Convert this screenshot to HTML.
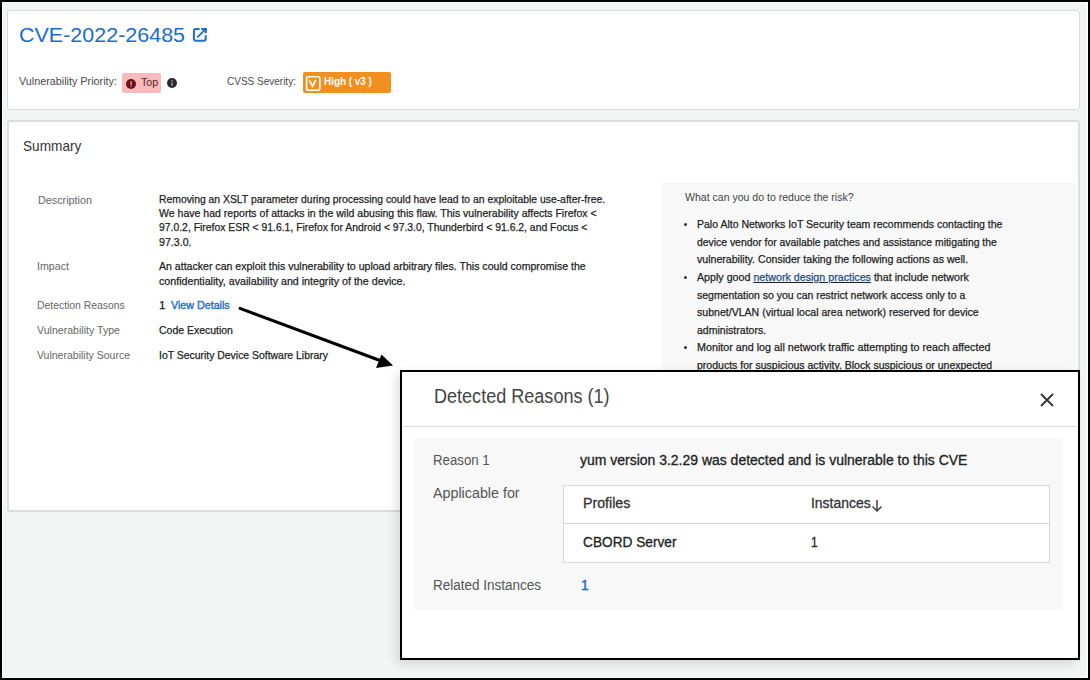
<!DOCTYPE html>
<html><head><meta charset="utf-8">
<style>
*{box-sizing:border-box;margin:0;padding:0}
html,body{width:1090px;height:680px;overflow:hidden}
body{position:relative;background:#000;font-family:"Liberation Sans",sans-serif;color:#333}
.frame{position:absolute;left:2px;top:2px;width:1086px;height:676px;background:#f3f4f4;border:1px solid #fff}
.abs{position:absolute}
.t{position:absolute;white-space:nowrap;line-height:1;transform-origin:0 0}
.card{position:absolute;background:#fff;border:1px solid #d9dbdb;border-radius:3px}
#c1{left:7px;top:10px;width:1073px;height:100px}
#c2{left:7px;top:120px;width:1073px;height:392px;border-width:2px;border-color:#dcdede}
.panel{position:absolute;left:662px;top:183px;width:415px;height:328px;background:#f8f8f8}
.bul{position:absolute;width:3px;height:3px;border-radius:50%;background:#333}
.modal{position:absolute;left:400px;top:370px;width:680px;height:290px;background:#fff;border:2px solid #000;box-shadow:-4px 4px 10px rgba(0,0,0,.12)}
</style></head>
<body>
<div class="frame"></div>
<div class="card" id="c1"></div>
<svg class="abs" style="left:192px;top:27px" width="16" height="16" viewBox="0 0 16 16"><path d="M7.6 2H3.9Q1.9 2 1.9 4V11.8Q1.9 13.8 3.9 13.8H11.7Q13.7 13.8 13.7 11.8V8.2" fill="none" stroke="#1a6dcc" stroke-width="2"/><path d="M9.2 2H13.7V6.3" fill="none" stroke="#1a6dcc" stroke-width="2"/><path d="M5.3 10.3L13 2.6" fill="none" stroke="#1a6dcc" stroke-width="1.9"/><path d="M10.5 1H14.7V5.2Z" fill="#1a6dcc"/></svg>
<div class="abs" style="left:122px;top:73px;width:39px;height:20px;background:#f8babd;border-radius:2px"></div>
<svg class="abs" style="left:126px;top:79px" width="10" height="10"><circle cx="5" cy="5" r="5" fill="#6d1111"/><rect x="4.5" y="2.2" width="1.1" height="3.8" fill="#e8c8c8"/><rect x="4.5" y="6.8" width="1.1" height="1.1" fill="#e8c8c8"/></svg>
<svg class="abs" style="left:166.5px;top:78px" width="10" height="10"><circle cx="5" cy="5" r="5" fill="#2a2a2a"/><rect x="4.5" y="4.2" width="1" height="3.8" fill="#ccc"/><rect x="4.5" y="2" width="1" height="1.2" fill="#ccc"/></svg>
<div class="abs" style="left:303px;top:72px;width:88px;height:21px;background:#f18f1f;border-radius:2px"></div>
<svg class="abs" style="left:305px;top:75px" width="16" height="16" viewBox="0 0 16 16"><rect x="1.6" y="1.8" width="13.2" height="13.4" rx="1.5" fill="none" stroke="#fff" stroke-width="1.6"/><path d="M4.2 4.8L7.5 11.4L10.8 4.8" fill="none" stroke="#fff" stroke-width="1.7"/></svg>
<div class="card" id="c2"></div>
<div class="panel"></div>
<div class="bul" style="left:684px;top:223px"></div>
<div class="bul" style="left:684px;top:276px"></div>
<div class="bul" style="left:684px;top:346px"></div>
<div class="t" style="left:18.78px;top:24.65px;font-size:20.5px;color:#1a6dcc;font-weight:400;transform:scaleX(1.0481)">CVE-2022-26485</div>
<div class="t" style="left:18.54px;top:76.27px;font-size:11.5px;color:#4a4a4a;font-weight:400;transform:scaleX(0.9380)">Vulnerability Priority:</div>
<div class="t" style="left:140.54px;top:77.27px;font-size:11.5px;color:#5e2222;font-weight:400;transform:scaleX(0.9285)">Top</div>
<div class="t" style="left:226.54px;top:76.27px;font-size:11.5px;color:#4a4a4a;font-weight:400;transform:scaleX(0.8697)">CVSS Severity:</div>
<div class="t" style="left:323.54px;top:75.87px;font-size:11.5px;color:#fff;font-weight:700;transform:scaleX(0.8620)">High ( v3 )</div>
<div class="t" style="left:23.12px;top:138.63px;font-size:14.5px;color:#333;font-weight:400;transform:scaleX(0.9406)">Summary</div>
<div class="t" style="left:37.75px;top:194.52px;font-size:11.2px;color:#666;font-weight:400;transform:scaleX(0.9648)">Description</div>
<div class="t" style="left:158.95px;top:194.12px;font-size:11.2px;color:#222;font-weight:400;transform:scaleX(0.9276);-webkit-text-stroke:0.25px #222">Removing an XSLT parameter during processing could have lead to an exploitable use-after-free.</div>
<div class="t" style="left:158.95px;top:207.92px;font-size:11.2px;color:#222;font-weight:400;transform:scaleX(0.9416);-webkit-text-stroke:0.25px #222">We have had reports of attacks in the wild abusing this flaw. This vulnerability affects Firefox &lt;</div>
<div class="t" style="left:158.95px;top:221.72px;font-size:11.2px;color:#222;font-weight:400;transform:scaleX(0.9286);-webkit-text-stroke:0.25px #222">97.0.2, Firefox ESR &lt; 91.6.1, Firefox for Android &lt; 97.3.0, Thunderbird &lt; 91.6.2, and Focus &lt;</div>
<div class="t" style="left:158.95px;top:236.52px;font-size:11.2px;color:#222;font-weight:400;transform:scaleX(0.9497);-webkit-text-stroke:0.25px #222">97.3.0.</div>
<div class="t" style="left:37.45px;top:261.32px;font-size:11.2px;color:#666;font-weight:400;transform:scaleX(0.9529)">Impact</div>
<div class="t" style="left:158.95px;top:261.12px;font-size:11.2px;color:#222;font-weight:400;transform:scaleX(0.9443);-webkit-text-stroke:0.25px #222">An attacker can exploit this vulnerability to upload arbitrary files. This could compromise the</div>
<div class="t" style="left:158.95px;top:275.92px;font-size:11.2px;color:#222;font-weight:400;transform:scaleX(0.9536);-webkit-text-stroke:0.25px #222">confidentiality, availability and integrity of the device.</div>
<div class="t" style="left:37.45px;top:300.12px;font-size:11.2px;color:#666;font-weight:400;transform:scaleX(0.9288)">Detection Reasons</div>
<div class="t" style="left:158.95px;top:300.12px;font-size:11.2px;color:#222;font-weight:400;transform:scaleX(1.0420);-webkit-text-stroke:0.25px #222">1</div>
<div class="t" style="left:170.55px;top:300.12px;font-size:11.2px;color:#1a6dcc;font-weight:400;transform:scaleX(0.9566);-webkit-text-stroke:0.4px #1a6dcc">View Details</div>
<div class="t" style="left:37.45px;top:325.02px;font-size:11.2px;color:#666;font-weight:400;transform:scaleX(0.9465)">Vulnerability Type</div>
<div class="t" style="left:158.95px;top:325.32px;font-size:11.2px;color:#222;font-weight:400;transform:scaleX(0.9354);-webkit-text-stroke:0.25px #222">Code Execution</div>
<div class="t" style="left:37.45px;top:349.82px;font-size:11.2px;color:#666;font-weight:400;transform:scaleX(0.9385)">Vulnerability Source</div>
<div class="t" style="left:158.95px;top:350.22px;font-size:11.2px;color:#222;font-weight:400;transform:scaleX(0.9313);-webkit-text-stroke:0.25px #222">IoT Security Device Software Library</div>
<div class="t" style="left:684.55px;top:192.42px;font-size:11.2px;color:#444;font-weight:400;transform:scaleX(0.9413)">What can you do to reduce the risk?</div>
<div class="t" style="left:697.25px;top:219.12px;font-size:11.2px;color:#222;font-weight:400;transform:scaleX(0.9397);-webkit-text-stroke:0.25px #222">Palo Alto Networks IoT Security team recommends contacting the</div>
<div class="t" style="left:697.25px;top:236.82px;font-size:11.2px;color:#222;font-weight:400;transform:scaleX(0.9288);-webkit-text-stroke:0.25px #222">device vendor for available patches and assistance mitigating the</div>
<div class="t" style="left:697.25px;top:254.32px;font-size:11.2px;color:#222;font-weight:400;transform:scaleX(0.9463);-webkit-text-stroke:0.25px #222">vulnerability. Consider taking the following actions as well.</div>
<div class="t" style="left:697.25px;top:271.82px;font-size:11.2px;color:#222;font-weight:400;transform:scaleX(0.9545);-webkit-text-stroke:0.25px #222">Apply good <span style="color:#1a6dcc;text-decoration:underline">network design practices</span> that include network</div>
<div class="t" style="left:697.25px;top:290.12px;font-size:11.2px;color:#222;font-weight:400;transform:scaleX(0.9356);-webkit-text-stroke:0.25px #222">segmentation so you can restrict network access only to a</div>
<div class="t" style="left:697.25px;top:307.42px;font-size:11.2px;color:#222;font-weight:400;transform:scaleX(0.9438);-webkit-text-stroke:0.25px #222">subnet/VLAN (virtual local area network) reserved for device</div>
<div class="t" style="left:697.25px;top:324.92px;font-size:11.2px;color:#222;font-weight:400;transform:scaleX(0.9430);-webkit-text-stroke:0.25px #222">administrators.</div>
<div class="t" style="left:697.25px;top:342.42px;font-size:11.2px;color:#222;font-weight:400;transform:scaleX(0.9602);-webkit-text-stroke:0.25px #222">Monitor and log all network traffic attempting to reach affected</div>
<div class="t" style="left:697.25px;top:359.92px;font-size:11.2px;color:#222;font-weight:400;transform:scaleX(0.9404);-webkit-text-stroke:0.25px #222">products for suspicious activity. Block suspicious or unexpected</div>

<svg class="abs" style="left:0;top:0" width="1090" height="680"><line x1="240" y1="308.4" x2="380" y2="360.5" stroke="#000" stroke-width="3" stroke-linecap="round"/><path d="M393 365.5L376 368L381.5 354.5Z" fill="#000"/></svg>
<div class="modal"></div>
<svg class="abs" style="left:1040px;top:393px" width="14" height="14"><path d="M1 1L13 13M13 1L1 13" stroke="#333" stroke-width="1.8"/></svg>
<div class="abs" style="left:402px;top:426px;width:676px;height:1px;background:#dcdcdc"></div>
<div class="abs" style="left:414px;top:438px;width:649px;height:172px;background:#f8f8f8"></div>
<div class="abs" style="left:563px;top:485px;width:487px;height:78px;background:#fff;border:1px solid #d6d6d6"></div>
<div class="abs" style="left:564px;top:523px;width:485px;height:1px;background:#d6d6d6"></div>
<svg class="abs" style="left:871px;top:499px" width="12" height="14"><path d="M6 1v11M1.5 7.5L6 12l4.5-4.5" fill="none" stroke="#444" stroke-width="1.5"/></svg>

<div class="t" style="left:433.72px;top:386.69px;font-size:19.5px;color:#444;font-weight:400;transform:scaleX(0.9255)">Detected Reasons (1)</div>
<div class="t" style="left:433.44px;top:452.65px;font-size:14px;color:#555;font-weight:400;transform:scaleX(0.9447)">Reason 1</div>
<div class="t" style="left:579.94px;top:452.95px;font-size:14px;color:#222;font-weight:400;transform:scaleX(0.9977);-webkit-text-stroke:0.3px #222">yum version 3.2.29 was detected and is vulnerable to this CVE</div>
<div class="t" style="left:432.94px;top:486.15px;font-size:14px;color:#555;font-weight:400;transform:scaleX(1.0211)">Applicable for</div>
<div class="t" style="left:582.64px;top:495.75px;font-size:14px;color:#333;font-weight:400;transform:scaleX(1.0135);-webkit-text-stroke:0.3px #333">Profiles</div>
<div class="t" style="left:811.44px;top:495.75px;font-size:14px;color:#333;font-weight:400;transform:scaleX(0.9947);-webkit-text-stroke:0.3px #333">Instances</div>
<div class="t" style="left:582.64px;top:535.15px;font-size:14px;color:#222;font-weight:400;transform:scaleX(0.9773);-webkit-text-stroke:0.3px #222">CBORD Server</div>
<div class="t" style="left:811.44px;top:534.75px;font-size:14px;color:#222;font-weight:400;transform:scaleX(0.8491);-webkit-text-stroke:0.3px #222">1</div>
<div class="t" style="left:433.44px;top:578.05px;font-size:14px;color:#555;font-weight:400;transform:scaleX(0.9629)">Related Instances</div>
<div class="t" style="left:580.94px;top:577.95px;font-size:14px;color:#1a6dcc;font-weight:400;transform:scaleX(0.9773);-webkit-text-stroke:0.5px #1a6dcc">1</div>
</body></html>
